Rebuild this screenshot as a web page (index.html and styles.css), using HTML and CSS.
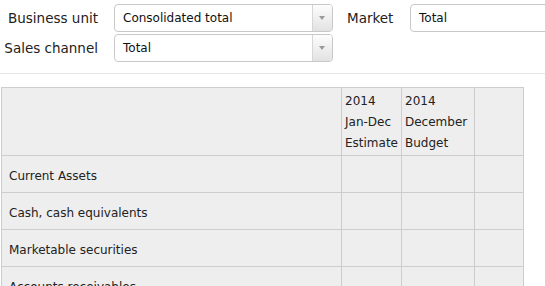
FILE: index.html
```html
<!DOCTYPE html>
<html lang="en">
<head>
  <meta charset="UTF-8" />
  <title>Balance sheet</title>
  <link rel="stylesheet" href="styles.css">
</head>
<body>
  <div class="filters">
    <div class="filter-col">
      <div class="filter">
        <span class="label">Business unit</span>
        <div class="select"><span class="value">Consolidated total</span><span class="arrow"></span></div>
      </div>
      <div class="filter">
        <span class="label">Sales channel</span>
        <div class="select"><span class="value">Total</span><span class="arrow"></span></div>
      </div>
    </div>
    <div class="filter market">
      <span class="label">Market</span>
      <div class="select wide"><span class="value">Total</span></div>
    </div>
  </div>

  <hr class="divider" />

  <table class="report">
    <colgroup>
      <col class="col-name" />
      <col class="col-estimate" />
      <col class="col-budget" />
      <col class="col-extra" />
    </colgroup>
    <thead>
      <tr>
        <th></th>
        <th>2014<br />Jan-Dec<br />Estimate</th>
        <th>2014<br />December<br />Budget</th>
        <th></th>
      </tr>
    </thead>
    <tbody>
      <tr><td>Current Assets</td><td></td><td></td><td></td></tr>
      <tr><td>Cash, cash equivalents</td><td></td><td></td><td></td></tr>
      <tr><td>Marketable securities</td><td></td><td></td><td></td></tr>
      <tr><td>Accounts receivables</td><td></td><td></td><td></td></tr>
    </tbody>
  </table>
</body>
</html>
```

FILE: styles.css
```css
body {
  margin: 0;
  font-family: 'DejaVu Sans', sans-serif;
  font-size: 12px;
  color: #222;
  background: #fff;
  overflow: hidden;
}

.filters {
  display: flex;
  padding-top: 4px;
}

.filter-col {
  display: flex;
  flex-direction: column;
  gap: 2px;
}

.filter {
  display: flex;
  align-items: center;
}

.label {
  width: 114px;
  padding-right: 16px;
  text-align: right;
  font-size: 13.5px;
  white-space: nowrap;
  box-sizing: border-box;
}

.market {
  align-self: flex-start;
  margin-left: 14px;
}

.market .label {
  width: 63px;
  padding-right: 0;
  text-align: left;
}

.select {
  display: flex;
  width: 219px;
  height: 28px;
  border: 1px solid #c8c8c8;
  border-radius: 4px;
  box-sizing: border-box;
  background: #fff;
  overflow: hidden;
}

.select.wide {
  width: 160px;
}

.value {
  flex: 1;
  padding-left: 8px;
  line-height: 26px;
  color: #111;
}

.arrow {
  width: 19px;
  border-left: 1px solid #d6d6d6;
  background: linear-gradient(#fdfdfd, #e2e2e2);
  position: relative;
}

.arrow::after {
  content: "";
  position: absolute;
  left: 6px;
  top: 11px;
  border-left: 3px solid transparent;
  border-right: 3px solid transparent;
  border-top: 4px solid #9a9a9a;
}

.divider {
  border: none;
  border-top: 1px solid #e6e6e6;
  margin: 11px 0 13px;
}

.report {
  margin-left: 1px;
  width: 522px;
  table-layout: fixed;
  border-collapse: collapse;
  background: #eee;
  font-size: 12px;
}

.col-name { width: 340px; }
.col-estimate { width: 60px; }
.col-budget { width: 73px; }
.col-extra { width: 49px; }

.report th,
.report td {
  border: 1px solid #cdcdcd;
}

.report th {
  font-weight: normal;
  text-align: left;
  vertical-align: top;
  padding: 3px 3px 1px;
  line-height: 21px;
  white-space: nowrap;
}

.report td {
  height: 37px;
  padding: 3px 7px 0;
  box-sizing: border-box;
}
```
